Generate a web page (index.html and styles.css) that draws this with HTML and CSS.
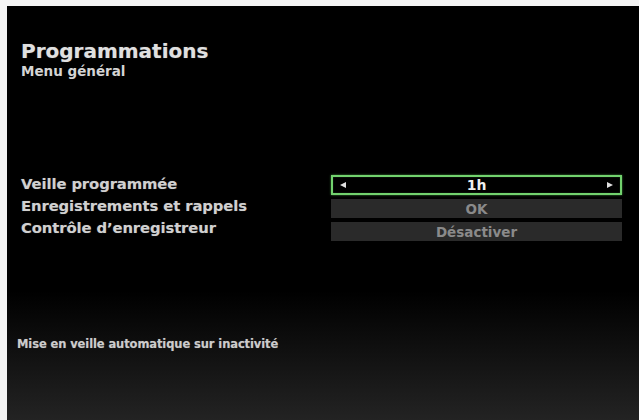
FILE: index.html
```html
<!DOCTYPE html>
<html lang="fr">
<head>
<meta charset="utf-8">
<title>Programmations</title>
<link rel="stylesheet" href="styles.css">
</head>
<body>
<div class="screen">
  <header class="head">
    <h1 class="title">Programmations</h1>
    <div class="subtitle">Menu général</div>
  </header>
  <div class="menu">
    <div class="labels">
      <div class="label">Veille programmée</div>
      <div class="label">Enregistrements et rappels</div>
      <div class="label">Contrôle d’enregistreur</div>
    </div>
    <div class="ctrls">
      <div class="ctrl selected">
        <span class="arrow left"></span>
        <span class="value">1h</span>
        <span class="arrow right"></span>
      </div>
      <div class="ctrl"><span class="value dim">OK</span></div>
      <div class="ctrl"><span class="value dim">Désactiver</span></div>
    </div>
  </div>
  <div class="help">Mise en veille automatique sur inactivité</div>
</div>
</body>
</html>
```
FILE: styles.css
```css
html, body {
  margin: 0;
  padding: 0;
  background: #f4f4f4;
  width: 639px;
  height: 420px;
  overflow: hidden;
}
.screen {
  margin: 6px 0 0 7px;
  height: 414px;
  background: linear-gradient(to bottom, #000 0, #000 285px, #232323 414px);
  font-family: "DejaVu Sans", sans-serif;
  font-weight: bold;
  color: #dcdcdc;
  display: flex;
  flex-direction: column;
  padding: 0 17px 0 14px;
  box-sizing: border-box;
}
.head {
  padding-top: 33px;
}
.title {
  margin: 0;
  font-size: 20px;
  line-height: 24px;
  font-weight: bold;
  color: #e0e0e0;
  text-shadow: 0 0 1px rgba(255,255,255,0.35);
}
.subtitle {
  font-size: 13.5px;
  line-height: 14px;
  margin-top: 1px;
  color: #d4d4d4;
}
.menu {
  margin-top: 94px;
  display: grid;
  grid-template-columns: 310px 291px;
}
.labels {
  display: flex;
  flex-direction: column;
  padding-top: 1px;
}
.label {
  font-size: 14.8px;
  line-height: 22px;
  color: #d0d0d0;
  letter-spacing: -0.1px;
  white-space: nowrap;
  text-shadow: 0 0 1px rgba(255,255,255,0.3);
}
.ctrls {
  display: flex;
  flex-direction: column;
  gap: 4px;
  padding-top: 3px;
}
.ctrl {
  height: 19px;
  background: #2a2a2a;
  display: flex;
  align-items: center;
  justify-content: center;
  box-sizing: border-box;
}
.ctrl.selected {
  height: 20px;
  background: #000;
  border: 2px solid #72d26e;
  box-shadow: 0 0 2px #3f8a3c, inset 0 0 1px #3f8a3c;
  justify-content: space-between;
  padding: 0 7px;
}
.value {
  font-size: 14px;
  color: #f0f0f0;
}
.value.dim {
  color: #8a8a8a;
  font-size: 13.5px;
}
.arrow {
  width: 0;
  height: 0;
  border-top: 3px solid transparent;
  border-bottom: 3px solid transparent;
}
.arrow.left { border-right: 6px solid #e0e0e0; }
.arrow.right { border-left: 6px solid #e0e0e0; }
.help {
  margin-top: 96px;
  margin-left: -4px;
  font-size: 11.5px;
  color: #cccccc;
  letter-spacing: -0.1px;
  text-shadow: 0 0 1px rgba(255,255,255,0.3);
}
```
